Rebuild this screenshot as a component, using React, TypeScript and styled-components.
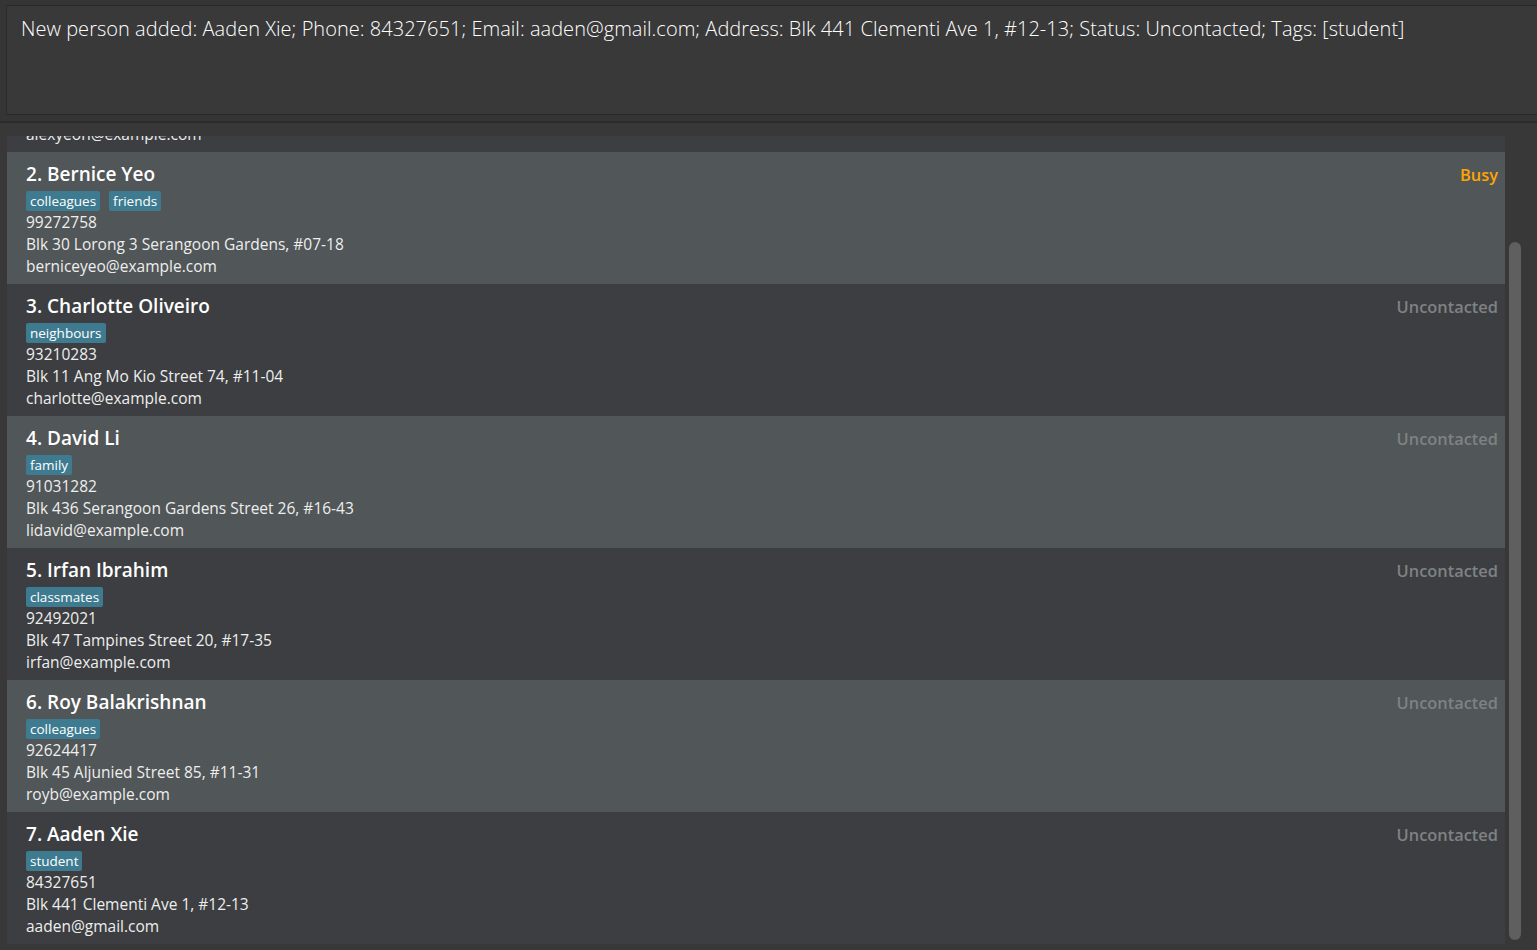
import styled, { createGlobalStyle } from 'styled-components';

const GlobalStyle = createGlobalStyle`
html, body {
  margin: 0;
  padding: 0;
  background: #353535;
  font-family: "Open Sans", "Noto Sans", sans-serif;
}
`

type Status = 'Busy' | 'Uncontacted';

interface IPerson {
    index: number;
    name: string;
    tags: string[];
    phone: string;
    address: string;
    email: string;
    status: Status;
}

const persons: IPerson[] = [
    { index: 1, name: 'Alex Yeoh', tags: ['friends'], phone: '87438807', address: 'Blk 30 Geylang Street 29, #06-40', email: 'alexyeoh@example.com', status: 'Uncontacted' },
    { index: 2, name: 'Bernice Yeo', tags: ['colleagues', 'friends'], phone: '99272758', address: 'Blk 30 Lorong 3 Serangoon Gardens, #07-18', email: 'berniceyeo@example.com', status: 'Busy' },
    { index: 3, name: 'Charlotte Oliveiro', tags: ['neighbours'], phone: '93210283', address: 'Blk 11 Ang Mo Kio Street 74, #11-04', email: 'charlotte@example.com', status: 'Uncontacted' },
    { index: 4, name: 'David Li', tags: ['family'], phone: '91031282', address: 'Blk 436 Serangoon Gardens Street 26, #16-43', email: 'lidavid@example.com', status: 'Uncontacted' },
    { index: 5, name: 'Irfan Ibrahim', tags: ['classmates'], phone: '92492021', address: 'Blk 47 Tampines Street 20, #17-35', email: 'irfan@example.com', status: 'Uncontacted' },
    { index: 6, name: 'Roy Balakrishnan', tags: ['colleagues'], phone: '92624417', address: 'Blk 45 Aljunied Street 85, #11-31', email: 'royb@example.com', status: 'Uncontacted' },
    { index: 7, name: 'Aaden Xie', tags: ['student'], phone: '84327651', address: 'Blk 441 Clementi Ave 1, #12-13', email: 'aaden@gmail.com', status: 'Uncontacted' },
];

const resultText = 'New person added: Aaden Xie; Phone: 84327651; Email: aaden@gmail.com; Address: Blk 441 Clementi Ave 1, #12-13; Status: Uncontacted; Tags: [student]';

const Window = styled.div`
display: flex;
flex-direction: column;
height: 950px;
overflow: hidden;
background: #353535;
`

const ResultWrap = styled.div`
padding: 5px 0 0 6px;
`

const ResultBox = styled.div`
height: 110px;
background: #393939;
border: 1px solid #2a2a2a;
border-right: none;
box-sizing: border-box;
padding: 9px 14px;
color: #ffffff;
font-size: 20px;
font-weight: 300;
line-height: 28px;
letter-spacing: 0.03px;
white-space: nowrap;
`

const Divider = styled.div`
height: 6px;
border-bottom: 2px solid #2b2b2b;
background: #353535;
`

const ListPanel = styled.div`
flex: 1;
display: flex;
padding: 13px 0 0 7px;
min-height: 0;
background: #383838;
`

const Viewport = styled.div`
width: 1498px;
overflow: hidden;
`

const ScrollOffset = styled.div`
margin-top: -116px;
`

const Cell = styled.div<{ $odd: boolean }>`
height: 132px;
box-sizing: border-box;
padding: 8px 7px 0 19px;
display: flex;
justify-content: space-between;
background: ${p => p.$odd ? '#3c3e41' : '#515658'};
`

const Details = styled.div`
display: flex;
flex-direction: column;
`

const Name = styled.div`
color: #ffffff;
font-size: 19px;
font-weight: 600;
line-height: 28px;
`

const TagRow = styled.div`
display: flex;
gap: 9px;
margin: 3px 0 0;
`

const Tag = styled.span`
background: #3e7b91;
color: #ffffff;
font-size: 13.5px;
line-height: 20px;
padding: 0 4px;
border-radius: 2px;
`

const Line = styled.div`
color: #eeeeee;
font-size: 15.5px;
line-height: 22px;
`

const StatusLabel = styled.div<{ $busy: boolean }>`
color: ${p => p.$busy ? '#ffa500' : '#7f8284'};
font-size: 16.4px;
font-weight: 600;
line-height: 30px;
`

const ScrollTrack = styled.div`
width: 16px;
background: #383838;
display: flex;
justify-content: flex-end;
padding-right: 1px;
`

const ScrollThumb = styled.div`
width: 12px;
height: 698px;
margin-top: 106px;
border-radius: 6px;
background: #5f5f5f;
`

const PersonCard = ({ person }: { person: IPerson }) => (
    <Cell $odd={person.index % 2 === 1}>
        <Details>
            <Name>{person.index}. {person.name}</Name>
            <TagRow>
                {person.tags.map(t => <Tag key={t}>{t}</Tag>)}
            </TagRow>
            <Line>{person.phone}</Line>
            <Line>{person.address}</Line>
            <Line>{person.email}</Line>
        </Details>
        <StatusLabel $busy={person.status === 'Busy'}>{person.status}</StatusLabel>
    </Cell>
)

export default function App() {
    return (
        <>
            <GlobalStyle />
            <Window>
                <ResultWrap>
                    <ResultBox>{resultText}</ResultBox>
                </ResultWrap>
                <Divider />
                <ListPanel>
                    <Viewport>
                        <ScrollOffset>
                            {persons.map(p => <PersonCard key={p.index} person={p} />)}
                        </ScrollOffset>
                    </Viewport>
                    <ScrollTrack>
                        <ScrollThumb />
                    </ScrollTrack>
                </ListPanel>
            </Window>
        </>
    )
}
